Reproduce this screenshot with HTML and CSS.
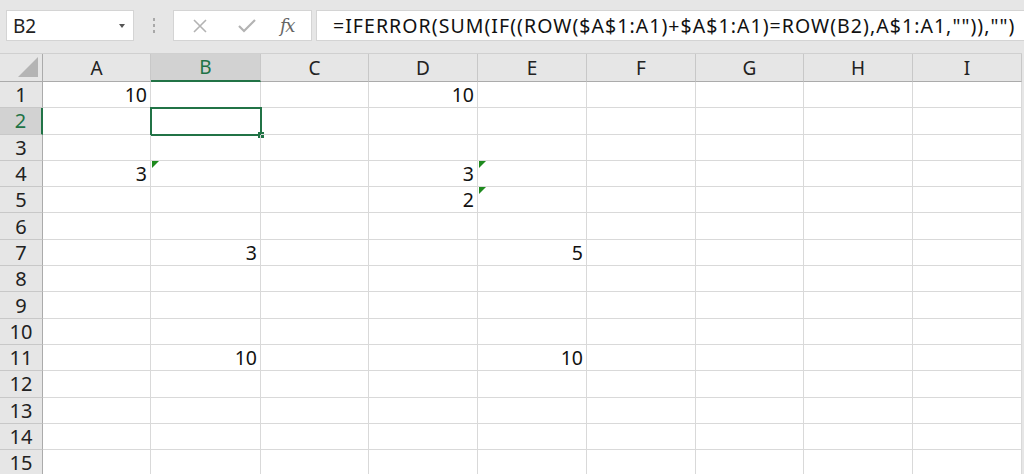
FILE: index.html
```html
<!DOCTYPE html>
<html>
<head>
<meta charset="utf-8">
<link rel="stylesheet" href="styles.css">
</head>
<body>
<div class="app">
  <div class="toolbar">
    <div class="namebox"><span class="nb-text">B2</span><span class="nb-arrow"></span></div>
    <div class="grip"><i></i><i></i><i></i></div>
    <div class="fbtns">
      <svg class="ic ic-x" width="16" height="16" viewBox="0 0 16 16"><path d="M2 2 L14 14 M14 2 L2 14" stroke="#b3b3b3" stroke-width="1.6" fill="none"/></svg>
      <svg class="ic ic-v" width="20" height="16" viewBox="0 0 20 16"><path d="M2 8 L7 13 L18 2" stroke="#b3b3b3" stroke-width="2.2" fill="none"/></svg>
      <span class="fx">fx</span>
    </div>
    <div class="formula">=IFERROR(SUM(IF((ROW($A$1:A1)+$A$1:A1)=ROW(B2),A$1:A1,"")),"")</div>
  </div>
  <div class="sheet">
    <div class="hd corner"><span class="tri"></span></div>
    <div class="hd col">A</div><div class="hd col on">B</div><div class="hd col">C</div><div class="hd col">D</div><div class="hd col">E</div><div class="hd col">F</div><div class="hd col">G</div><div class="hd col">H</div><div class="hd col">I</div>

    <div class="hd row">1</div><div class="c">10</div><div class="c"></div><div class="c"></div><div class="c">10</div><div class="c"></div><div class="c"></div><div class="c"></div><div class="c"></div><div class="c"></div>
    <div class="hd row on">2</div><div class="c"></div><div class="c sel"></div><div class="c"></div><div class="c"></div><div class="c"></div><div class="c"></div><div class="c"></div><div class="c"></div><div class="c"></div>
    <div class="hd row">3</div><div class="c"></div><div class="c"></div><div class="c"></div><div class="c"></div><div class="c"></div><div class="c"></div><div class="c"></div><div class="c"></div><div class="c"></div>
    <div class="hd row">4</div><div class="c">3</div><div class="c err"></div><div class="c"></div><div class="c">3</div><div class="c err"></div><div class="c"></div><div class="c"></div><div class="c"></div><div class="c"></div>
    <div class="hd row">5</div><div class="c"></div><div class="c"></div><div class="c"></div><div class="c">2</div><div class="c err"></div><div class="c"></div><div class="c"></div><div class="c"></div><div class="c"></div>
    <div class="hd row">6</div><div class="c"></div><div class="c"></div><div class="c"></div><div class="c"></div><div class="c"></div><div class="c"></div><div class="c"></div><div class="c"></div><div class="c"></div>
    <div class="hd row">7</div><div class="c"></div><div class="c">3</div><div class="c"></div><div class="c"></div><div class="c">5</div><div class="c"></div><div class="c"></div><div class="c"></div><div class="c"></div>
    <div class="hd row">8</div><div class="c"></div><div class="c"></div><div class="c"></div><div class="c"></div><div class="c"></div><div class="c"></div><div class="c"></div><div class="c"></div><div class="c"></div>
    <div class="hd row">9</div><div class="c"></div><div class="c"></div><div class="c"></div><div class="c"></div><div class="c"></div><div class="c"></div><div class="c"></div><div class="c"></div><div class="c"></div>
    <div class="hd row">10</div><div class="c"></div><div class="c"></div><div class="c"></div><div class="c"></div><div class="c"></div><div class="c"></div><div class="c"></div><div class="c"></div><div class="c"></div>
    <div class="hd row">11</div><div class="c"></div><div class="c">10</div><div class="c"></div><div class="c"></div><div class="c">10</div><div class="c"></div><div class="c"></div><div class="c"></div><div class="c"></div>
    <div class="hd row">12</div><div class="c"></div><div class="c"></div><div class="c"></div><div class="c"></div><div class="c"></div><div class="c"></div><div class="c"></div><div class="c"></div><div class="c"></div>
    <div class="hd row">13</div><div class="c"></div><div class="c"></div><div class="c"></div><div class="c"></div><div class="c"></div><div class="c"></div><div class="c"></div><div class="c"></div><div class="c"></div>
    <div class="hd row">14</div><div class="c"></div><div class="c"></div><div class="c"></div><div class="c"></div><div class="c"></div><div class="c"></div><div class="c"></div><div class="c"></div><div class="c"></div>
    <div class="hd row">15</div><div class="c"></div><div class="c"></div><div class="c"></div><div class="c"></div><div class="c"></div><div class="c"></div><div class="c"></div><div class="c"></div><div class="c"></div>
  </div>
</div>
</body>
</html>
```
FILE: styles.css
```css
* { box-sizing: border-box; }
html, body { margin: 0; padding: 0; }
body {
  width: 1024px;
  height: 474px;
  overflow: hidden;
  background: #e6e6e6;
  font-family: "Noto Sans", "Open Sans", sans-serif;
  color: #000;
}
.app { display: flex; flex-direction: column; height: 474px; }

.toolbar {
  height: 53px;
  display: flex;
  align-items: flex-start;
  padding-top: 10px;
  padding-left: 6px;
  background: #e6e6e6;
}
.namebox {
  width: 128px;
  height: 31px;
  background: #fff;
  border: 1px solid #d4d4d4;
  display: flex;
  align-items: center;
  justify-content: space-between;
  padding: 0 8px 0 6px;
}
.nb-text { font-size: 19px; color: #222; }
.nb-arrow {
  width: 0; height: 0;
  border-left: 3.5px solid transparent;
  border-right: 3.5px solid transparent;
  border-top: 4px solid #555;
}
.grip {
  width: 39px;
  height: 31px;
  display: flex;
  flex-direction: column;
  align-items: center;
  justify-content: center;
  gap: 3px;
}
.grip i { display: block; width: 2px; height: 3px; background: #a8a8a8; }
.fbtns {
  width: 139px;
  height: 31px;
  background: #fff;
  border: 1px solid #d4d4d4;
  display: flex;
  align-items: center;
  padding-left: 18px;
}
.ic-x { margin-right: 29px; }
.ic-v { margin-right: 23px; }
.fx {
  font-family: "DejaVu Serif", "Liberation Serif", serif;
  font-style: italic;
  font-size: 18px;
  color: #666;
  letter-spacing: -1.5px;
}
.formula {
  margin-left: 4px;
  flex: 1;
  height: 31px;
  background: #fff;
  border: 1px solid #d4d4d4;
  border-right: none;
  font-size: 19.5px;
  line-height: 29px;
  letter-spacing: 1.05px;
  padding-left: 16px;
  white-space: nowrap;
  overflow: hidden;
  color: #111;
}

.sheet {
  flex: 1;
  display: grid;
  grid-template-columns: 43px 108px 110px 108px 109px 109px 109px 108px 109px 109px;
  grid-template-rows: 28px repeat(15, 26.3px);
  background: #fff;
  border-top: 1px solid #d0d0d0;
  width: 1022px;
  overflow: hidden;
}
.hd {
  background: #e6e6e6;
  color: #222;
  font-size: 19px;
  display: flex;
  align-items: center;
}
.hd.col {
  justify-content: center;
  border-right: 1px solid #c8c8c8;
  border-bottom: 1px solid #ababab;
}
.hd.row {
  justify-content: center;
  border-right: 1px solid #ababab;
  border-bottom: 1px solid #c8c8c8;
  font-size: 20px;
}
.hd.corner {
  border-right: 1px solid #ababab;
  border-bottom: 1px solid #ababab;
  position: relative;
}
.tri {
  position: absolute;
  right: 4px;
  bottom: 4px;
  width: 0; height: 0;
  border-left: 20px solid transparent;
  border-bottom: 20px solid #b4b4b4;
}
.hd.on {
  background: #d2d2d2;
  color: #217346;
}
.hd.col.on { border-bottom: 2px solid #217346; }
.hd.row.on { border-right: 2px solid #217346; }

.c {
  border-right: 1px solid #d9d9d9;
  border-bottom: 1px solid #d9d9d9;
  font-size: 19.5px;
  line-height: 25px;
  text-align: right;
  padding-right: 3px;
  position: relative;
  color: #111;
}
.c.sel::before {
  content: "";
  position: absolute;
  left: -1px; top: -1px; right: -2px; bottom: -2px;
  border: 2px solid #217346;
}
.c.sel::after {
  content: "";
  position: absolute;
  right: -4px;
  bottom: -4px;
  width: 6px; height: 6px;
  background: #217346;
}
.c.err::before {
  content: "";
  position: absolute;
  left: 1px; top: 0;
  width: 0; height: 0;
  border-top: 7px solid #1e8a1e;
  border-right: 7px solid transparent;
}
```
